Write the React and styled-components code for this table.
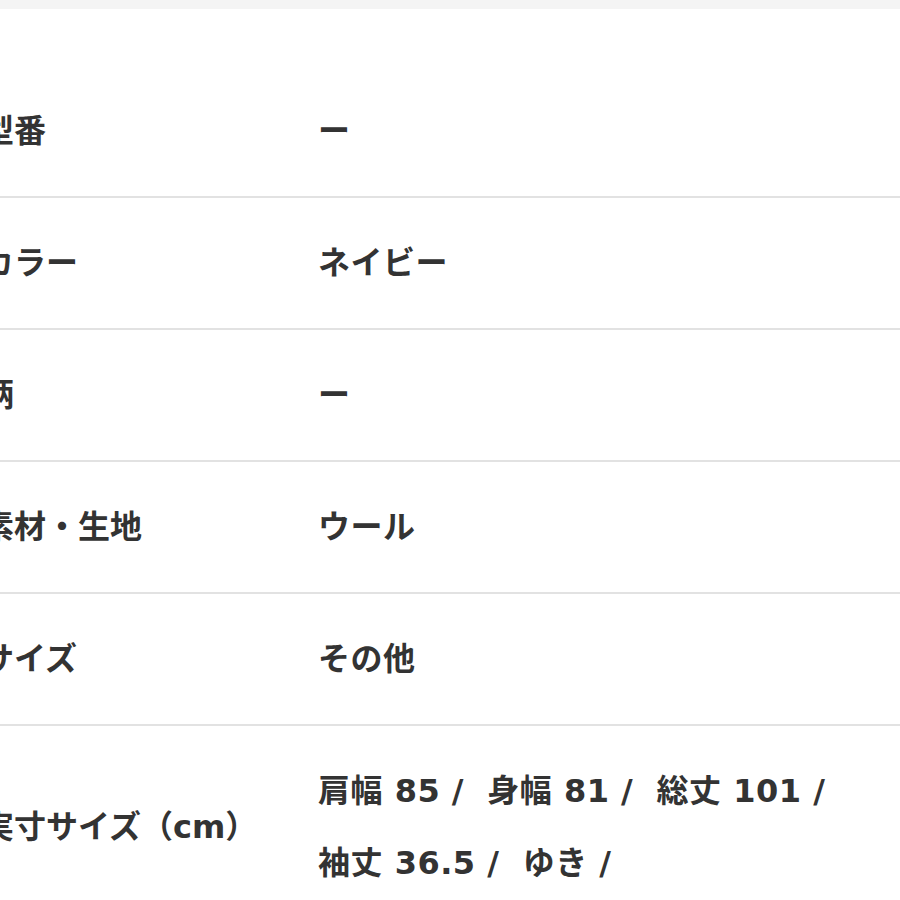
import React from 'react';
import styled, { createGlobalStyle } from 'styled-components';

const GlobalStyle = createGlobalStyle`
    html, body {
        margin: 0;
        padding: 0;
        background: #fff;
        overflow: hidden;
    }
    body {
        font-family: "DejaVu Sans", "Noto Sans CJK JP", sans-serif;
        color: #333;
    }
`;

const TopBar = styled.div`
    height: 9px;
    background: #f4f4f4;
`;

const Table = styled.dl`
    margin: 57px 0 0 -18px;
    padding: 0;
`;

const Row = styled.div`
    display: grid;
    grid-template-columns: 336px 545px;
    align-items: center;
    padding: 29px 0;
    border-bottom: ${({ last }) => (last ? 'none' : '2px solid #e2e2e2')};
`;

const Label = styled.dt`
    margin: 0;
    font-size: 32px;
    font-weight: 700;
    line-height: 72px;
    white-space: nowrap;
`;

const Value = styled.dd`
    margin: 0;
    font-size: 32px;
    font-weight: 700;
    line-height: 72px;
    letter-spacing: 0.5px;
`;

const rows = [
    { label: '型番', value: 'ー' },
    { label: 'カラー', value: 'ネイビー' },
    { label: '柄', value: 'ー' },
    { label: '素材・生地', value: 'ウール' },
    { label: 'サイズ', value: 'その他' },
    { label: '実寸サイズ（cm）', value: '肩幅 85 /\u00a0 身幅 81 /\u00a0 総丈 101 /\u00a0 袖丈 36.5 /\u00a0 ゆき /' },
];

export default function App() {
    return (
        <>
            <GlobalStyle />
            <TopBar />
            <Table>
                {rows.map((row, i) => (
                    <Row key={row.label} last={i === rows.length - 1}>
                        <Label>{row.label}</Label>
                        <Value>{row.value}</Value>
                    </Row>
                ))}
            </Table>
        </>
    );
}
